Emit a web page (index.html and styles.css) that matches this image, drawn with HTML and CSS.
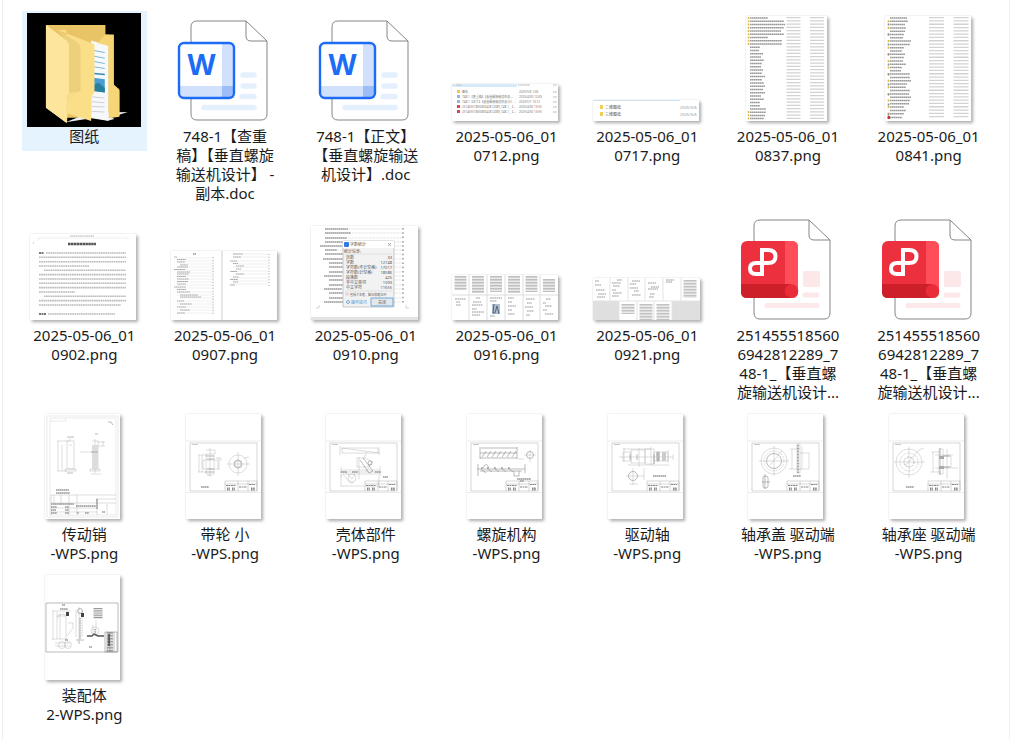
FILE: index.html
```html
<!DOCTYPE html>
<html lang="zh-CN">
<head>
  <meta charset="utf-8">
  <title>文件</title>
  <link rel="stylesheet" href="styles.css">
</head>
<body>
  <!-- Shared icons -->
  <svg class="defs" aria-hidden="true">
    <symbol id="page" viewBox="0 0 114 114">
      <path d="M29 8h49l21 20v73q0 6-6 6H29q-6 0-6-6V14q0-6 6-6z" fill="#fff" stroke="#858585"/>
      <path d="M78 8v15q0 5 5 5h16" fill="none" stroke="#858585"/>
    </symbol>
    <symbol id="doc" viewBox="0 0 114 114">
      <use href="#page"/>
      <path d="M75 62h11M75 73h11M74 83.500h12M36 94.500h50" stroke="#e5f0ff" stroke-width="5.500" stroke-linecap="round"/>
      <rect x="11" y="30" width="55" height="55" rx="5" fill="#fff"/>
      <path d="M54 30h7q5 0 5 5v50H54z" fill="#d1e0fb"/>
      <path d="M11 73h55v7q0 5-5 5H16q-5 0-5-5z" fill="#d1e0fb"/>
      <path d="M54 73h12v7q0 5-5 5h-7z" fill="#9dbdf8"/>
      <rect x="11" y="30" width="55" height="55" rx="5" fill="none" stroke="#1c6cf6" stroke-width="2.400"/>
      <text x="33.500" y="62" class="word">W</text>
    </symbol>
    <symbol id="pdf" viewBox="0 0 114 114">
      <use href="#page"/>
      <rect x="72" y="59" width="17" height="16" rx="2" fill="#fce8e9"/>
      <path d="M74 83h12M36 93.500h50" stroke="#fce8e9" stroke-width="5" stroke-linecap="round"/>
      <rect x="10" y="29" width="57" height="57" rx="6" fill="#ec303d"/>
      <path d="M54 29h7q6 0 6 6v45q0 6-6 6h-7z" fill="#ff4e59"/>
      <path d="M10 72h50v14H16q-6 0-6-6z" fill="#cd1f2a"/>
      <circle cx="60.500" cy="79" r="6.800" fill="#ea2c39"/>
      <path d="M31 62V38h6q7.500 0 7.500 6.500T37 51H25q-6 0-6 5.500t6 5.500h6z" fill="none" stroke="#fff" stroke-width="4"/>
    </symbol>

    <!-- Sheet frame with the title block, used by the drawings -->
    <symbol id="sheet" viewBox="0 0 75 105">
      <path d="M0 27h75M0 78.500h75" stroke="#ececec"/>
      <path d="M4 29h67v48H4zM39 67h32v10M39 67v10M39 70h32M52 67v10M62 67v10" fill="none" stroke="#999" stroke-width=".4"/>
      <path d="M6 30.500h6" stroke="#bbb" stroke-width=".8"/>
      <path d="M40 71.500h10M53 73h8M63 70.500h6" stroke="#888" stroke-width="1" stroke-dasharray="2 .5"/>
      <path d="M41 75h3M46 75h3M65 75h4" stroke="#888" stroke-width="3" stroke-dasharray="1.500 .7"/>
    </symbol>
  </svg>

  <main class="pane">
    <ul class="files">
      <li>
        <a class="file selected" href="#">
          <span class="thumb">
            <svg class="icon" viewBox="52 25 343 343">
              <path d="M52 25h343v343H52z" fill="#000"/>
              <path d="M109 61h179v29l25 2v155l17 12v76l-28 5H170z" fill="#e9c466"/>
              <path d="M168 354l70-28 117-3-50 16 10 5-20 5-50-7z" fill="#efefef"/>
              <path d="M245 108l52 15v226l-52-10z" fill="#f7f8fa"/>
              <path d="M288 90h25v150l17 15v82l-32 5V124l-34-9z" fill="#f5d576"/>
              <path d="M254 138l32 6M254 155l32 6M254 171l32 6M254 187l32 5" stroke="#79bad9" stroke-width="3"/>
              <path d="M254 207l32 3" stroke="#3387b8" stroke-width="5"/>
              <path d="M252 220l34 4v40l-34-4z" fill="#4a9dd0"/>
              <path d="M252 243l14-8 20 15v14l-34-4z" fill="#287f9c"/>
              <path d="M248 277l37 4M248 292l37 3M248 306l37 2M248 321l37 2" stroke="#bbb" stroke-width="2"/>
              <path d="M144 76l111 43v145l-9 12-1 74-75-24V76z" fill="#fbdf88"/>
              <path d="M144 76l58 36q11 7 11 18v128l-36 24V117z" fill="#ecd07b"/>
              <path d="M213 262l-35 20-6 74-63-46V61l56 42q13 10 13 22v140l35-3z" fill="#f7dc88"/>
              <path d="M109 61l56 42q13 10 13 22v143l-7 6v82l-62-46z" fill="#fde69c"/>
            </svg>
          </span>
          <span class="name">图纸</span>
        </a>
      </li>
      <li>
        <a class="file" href="#">
          <span class="thumb"><svg class="icon"><use href="#doc"/></svg></span>
          <span class="name">748-1【查重<br>稿】【垂直螺旋<br>输送机设计】 -<br>副本.doc</span>
        </a>
      </li>
      <li>
        <a class="file" href="#">
          <span class="thumb"><svg class="icon"><use href="#doc"/></svg></span>
          <span class="name">748-1【正文】<br>【垂直螺旋输送<br>机设计】.doc</span>
        </a>
      </li>
      <li>
        <a class="file" href="#">
          <span class="thumb">
            <svg class="picture" width="106" height="37" viewBox="0 0 106 37">
              <path d="M0 0h65v3H0z" fill="#d5eafa"/>
              <path d="M4 1h6M66 1h12M101 1h4" class="soft"/>
              <path d="M5 6h3v3H5z" fill="#f3c84c"/>
              <path d="M5 11h3v3H5zM5 16h3v3H5z" fill="#8ab8ec"/>
              <path d="M5 21h3v3H5zM5 26h3v3H5z" fill="#db4454"/>
              <g class="tiny">
                <text x="10" y="9">图纸</text><text x="67" y="9">2025/5/6 1:06</text>
                <text x="10" y="14">748-1【查重稿】【垂直螺旋输送机设...</text><text x="67" y="14">2025/4/30 12:00</text>
                <text x="10" y="19">748-1【正文】【垂直螺旋输送机设计】...</text><text x="67" y="19">2025/5/1 10:12</text>
                <text x="10" y="24">2514555185606942812289_748-1_【...</text><text x="67" y="24">2025/4/30 13:55</text>
                <text x="10" y="29">2514555185606942812289_748-1_【...</text><text x="67" y="29">2025/4/30 13:55</text>
              </g>
              <path d="M101 8h4M101 13h4M101 18h4M101 23h4M101 28h4" class="soft"/>
            </svg>
          </span>
          <span class="name">2025-05-06_01<br>0712.png</span>
        </a>
      </li>
      <li>
        <a class="file" href="#">
          <span class="thumb">
            <svg class="picture" width="106" height="21" viewBox="0 0 106 21">
              <path d="M0 0h87v1H0z" fill="#cfe5f8"/>
              <path d="M7 5h3v4H7zM7 12h3v4H7z" fill="#f4cb55"/>
              <g class="small">
                <text x="12" y="9">二维图纸</text><text x="87" y="9" class="date">2025/5/6</text>
                <text x="12" y="16">三维图纸</text><text x="87" y="16" class="date">2025/5/6</text>
              </g>
            </svg>
          </span>
          <span class="name">2025-05-06_01<br>0717.png</span>
        </a>
      </li>
      <li>
        <a class="file" href="#">
          <span class="thumb">
            <svg class="picture" width="81" height="105" viewBox="0 0 81 105">
              <path d="M4 2h18M4 5.200h34M4 8.500h35M4 11.700h34M4 15h31M4 18.200h34M4 21.500h18M4 24.700h32M4 28h32" class="words"/>
              <path d="M4 31.200h10M4 34.500h9M4 37.700h13M4 41h11M4 44.200h14M4 47.500h12M4 50.700h11M4 54h13M4 57.200h12M4 60.500h15M4 63.700h12M4 67h14M4 70.200h15M4 73.500h13M4 76.700h15M4 80h11M4 83.200h14M4 86.500h10M4 89.700h10M4 93h16M4 96.200h16M4 99.500h15M4 102.500h14" class="words"/>
              <path d="M2.500 1v29M2.500 95v9" stroke="#e2b945" stroke-width="1.600" stroke-dasharray="2 1.250"/>
              <path d="M47.500 1v103M71 1v103" stroke="#d2d2d2" stroke-width="14" stroke-dasharray="1.300 1.950"/>
            </svg>
          </span>
          <span class="name">2025-05-06_01<br>0837.png</span>
        </a>
      </li>
      <li>
        <a class="file" href="#">
          <span class="thumb">
            <svg class="picture" width="86" height="105" viewBox="0 0 86 105">
              <path d="M5 2h17M5 5.300h18M5 8.600h15M5 11.900h16M5 15.200h15M5 18.500h14M5 21.800h13M5 25.100h21M5 28.400h20M5 31.700h14M5 35h12M5 38.300h15M5 41.600h14M5 44.900h13M5 48.200h16M5 51.500h12M5 54.800h11M5 58.100h20M5 61.400h20M5 64.700h21M5 68h17M5 71.300h16M5 74.600h20M5 77.900h19M5 81.200h21M5 84.500h20M5 87.800h19M5 91.100h14M5 94.400h16M5 97.700h14M5 101.500h12" class="words"/>
              <path d="M3.500 4.300v96" stroke="#e0b53c" stroke-width="1.700" stroke-dasharray="2 4.600"/>
              <path d="M3.500 7.600v92" stroke="#888" stroke-width="1.500" stroke-dasharray="2 8"/>
              <path d="M2.500 100h2.500v3H2.500z" fill="#d32f36"/>
              <path d="M51.500 1v102M76 1v102" stroke="#d2d2d2" stroke-width="15" stroke-dasharray="1.300 2"/>
            </svg>
          </span>
          <span class="name">2025-05-06_01<br>0841.png</span>
        </a>
      </li>

      <li>
        <a class="file" href="#">
          <span class="thumb">
            <svg class="picture" width="106" height="86" viewBox="0 0 106 86">
              <path d="M8 7V4h90v3" fill="none" stroke="#ddd" stroke-width=".5"/>
              <path d="M40 2h24M3 9h1" class="soft"/>
              <path d="M38 10h28" stroke="#555" stroke-width="2.500" stroke-dasharray="2.500 .4"/>
              <path d="M9 19h5M9 80h7" stroke="#777" stroke-width="1.800" stroke-dasharray="2 .5"/>
              <path d="M16 19h80M9 23.300h87M9 27.700h87M9 32h50M14 36.300h82M9 40.600h87M9 45h87M9 49.300h87M9 53.600h87M9 58h36M14 62.300h82M9 66.600h87M9 71h82M18 80h67" class="prose"/>
            </svg>
          </span>
          <span class="name">2025-05-06_01<br>0902.png</span>
        </a>
      </li>
      <li>
        <a class="file" href="#">
          <span class="thumb">
            <svg class="picture" width="106" height="69" viewBox="0 0 106 69">
              <path d="M51 0v69" stroke="#ccc"/>
              <path d="M22 3h3" class="words"/>
              <path d="M5 7h38M6 10h37M9 13h34M6 16h37M3 19h40M6 22h37M6 25h37M6 28h37M6 31h37M6 34h37M3 37h40M6 41h37M6 44h37M9 47h34M9 50h34M6 53h37M9 56h34M6 59h37M6 62h37M62 3h36M62 6h36M62 10h36M62 13h36M62 16h36M62 20h36M62 23h36M59 27h39M62 30h36M59 33h39" stroke="#ddd" stroke-width=".5"/>
              <path d="M3 6h3M6 8.500h9M6 11h8M9 14h8M6 16h11M3 18.500h11M6 21h13M6 23h12M6 25.500h9M6 28h12M6 30.500h11M6 33h9M3 36h12M6 38.500h9M6 41h13M9 44h18M9 46h21M6 50h7M9 53h12M6 56h9M9 59h10M6 62h8M62 3h10M62 6h8M59 10h7M62 12.500h5M65 15h8M65 18h5M59 20.500h7M65 23h8M62 26h6M59 28.500h8M62 31h5M59 34h5" class="toc"/>
              <path d="M42 6v57M98 3v32" stroke="#aaa" stroke-dasharray="1 1.800"/>
            </svg>
          </span>
          <span class="name">2025-05-06_01<br>0907.png</span>
        </a>
      </li>
      <li>
        <a class="file" href="#">
          <span class="thumb">
            <svg class="picture" width="107" height="94" viewBox="0 0 107 94">
              <path d="M0 91h107v3H0z" fill="#e3e3e3"/>
              <path d="M14 3h23M14 7h26M14 12h22M14 16h22M9 20h22M14 24h12M14 28h18M12 33h20M18 37h14M18 41h14M18 46h14M13 50h18M18 54h14M18 59h14M13 63h18M18 67h14M18 72h14M13 76h20" class="words"/>
              <path d="M38 3h53M41 7h50M37 12h54M37 16h54M30 20h61M26 24h65M32 28h59M32 33h59M32 37h59M32 41h59M32 46h59M32 50h59M32 54h59M32 59h59M32 63h59M32 67h59M32 72h59M34 76h57" stroke="#bbb" stroke-width=".6" stroke-dasharray=".7 .7"/>
              <path d="M92 2v76" stroke="#999" stroke-width="1.500" stroke-dasharray="1.500 2.800"/>
              <path d="M5 82h3v-3M95 79v3h3" fill="none" stroke="#aaa" stroke-width=".5"/>
              <path d="M32 15h51v66H32z" fill="#f2f2f2" stroke="#bbb" stroke-width=".8"/>
              <path d="M32 15h51v7H32z" fill="#fff"/>
              <rect x="33" y="16" width="5" height="5" rx="1" fill="#2f7be8"/>
              <path d="M77 17l3 3m0-3l-3 3" stroke="#666" stroke-width=".5"/>
              <path d="M34 28h47M34 65h47" stroke="#ccc" stroke-width=".5"/>
              <g class="small">
                <text x="39" y="20">字数统计</text>
                <text x="33" y="27">统计信息:</text>
                <text x="35" y="33">页数</text><text x="81" y="33" class="value">33</text>
                <text x="35" y="38">字数</text><text x="81" y="38" class="value">12748</text>
                <text x="35" y="43">字符数(不计空格)</text><text x="81" y="43" class="value">17017</text>
                <text x="35" y="48">字符数(计空格)</text><text x="81" y="48" class="value">18586</text>
                <text x="35" y="53">段落数</text><text x="81" y="53" class="value">425</text>
                <text x="35" y="58">非中文单词</text><text x="81" y="58" class="value">1093</text>
                <text x="35" y="63">中文字符</text><text x="81" y="63" class="value">11655</text>
                <text x="39" y="70" class="option">包括文本框、脚注和尾注(F)</text>
                <text x="40" y="78" class="blue">操作技巧</text>
              </g>
              <path d="M35 67h2v2h-2z" fill="#fff" stroke="#999" stroke-width=".4"/>
              <circle cx="37" cy="76" r="1.500" fill="none" stroke="#468fd8" stroke-width=".7"/>
              <path d="M60 72h22v8H60z" fill="#e5e8eb" stroke="#4f9bd4" stroke-width=".8"/>
              <text x="67" y="78" class="small">关闭</text>
            </svg>
          </span>
          <span class="name">2025-05-06_01<br>0910.png</span>
        </a>
      </li>
      <li>
        <a class="file" href="#">
          <span class="thumb">
            <svg class="picture" width="106" height="45" viewBox="0 0 106 45">
              <path d="M17 0v45M35 0v45M53 0v45M71 0v45M88 0v45M0 20h106" stroke="#ddd"/>
              <path d="M8.500 1v14M26 1v17M44 1v16M62 1v17M79.500 1v16M97 4v13" stroke="#aaa" stroke-width="12" stroke-dasharray=".7 .8"/>
              <path d="M3 24h11M4 27h4M4 30h5M24 23h4M21 27h8M20 30h11M20 34h5M20 37h12M20 40h8M38 23h12M38 26h7M56 23h6M56 27h4M56 31h8M56 35h4M56 39h7M74 24h9M75 28h5M73 32h8M75 36h7M74 40h4M94 24h5M91 28h3M93 31h7M91 35h4M93 39h8" class="prose"/>
              <path d="M40 29h8v10h-8z" fill="#aebed0"/>
              <path d="M42 29l-1 9h2l2-7 2 8" fill="none" stroke="#546678"/>
              <path d="M38 41h5" class="prose"/>
            </svg>
          </span>
          <span class="name">2025-05-06_01<br>0916.png</span>
        </a>
      </li>
      <li>
        <a class="file" href="#">
          <span class="thumb">
            <svg class="picture" width="107" height="42" viewBox="0 0 107 42">
              <path d="M0 23h26v19H0zM79 23h28v19H79z" fill="#dfdfdf"/>
              <path d="M17 0v23M35 0v23M52 0v23M70 0v23M88 0v23M0 23h107M26 23v19M44 23v19M61 23v19M79 23v19" stroke="#e3e3e3"/>
              <path d="M2 3h4M2 7h6M3 12h9M5 16h8M4 19h8M24 2h5M19 5h9M20 8h7M19 12h4M20 15h9M19 18h7M39 3h8M37 6h6M37 10h8M41 13h5M39 17h9M55 5h8M58 9h8M55 11h10M57 16h5M56 19h5M73 2h8M73 4h6" class="prose"/>
              <path d="M97 2v18M35 26v10M53 26v16M70 26v16" stroke="#b0b0b0" stroke-width="13" stroke-dasharray=".7 .8"/>
            </svg>
          </span>
          <span class="name">2025-05-06_01<br>0921.png</span>
        </a>
      </li>
      <li>
        <a class="file" href="#">
          <span class="thumb"><svg class="icon"><use href="#pdf"/></svg></span>
          <span class="name">251455518560<br>6942812289_7<br>48-1_【垂直螺<br>旋输送机设计...</span>
        </a>
      </li>
      <li>
        <a class="file" href="#">
          <span class="thumb"><svg class="icon"><use href="#pdf"/></svg></span>
          <span class="name">251455518560<br>6942812289_7<br>48-1_【垂直螺<br>旋输送机设计...</span>
        </a>
      </li>

      <li>
        <a class="file" href="#">
          <span class="thumb">
            <svg class="picture drawing" viewBox="0 0 75 105">
              <path d="M2 2h71v101H2zM5 4h66v97H5zM5 7h16V4" class="line pale"/>
              <path d="M22 27h7v28h-7zM20 55h11v2H20zM13 27v30M17 31v26M12 27h12M12 57h10M25 24v3M24 31h3M47 27h6v28h-6M45 55h10v2H45zM58 27v5M53 28h7M53 32h7M46 60h10M35 38h12M50 25v34" class="line"/>
              <path d="M47 31h6v24h-6z" fill="#ddd"/>
              <path d="M22 23h7M22 59h6M50 20h3M46 38h7M63 8h3l2 3" class="line dark"/>
              <path d="M11 76h13M11 79h14" class="words"/>
              <path d="M6 81h65M6 89h65M6 94h46M6 98h46M6 81v20M32 81v20M52 84v17M9 81v10M16 81v10M24 81v20M62 90v11M52 85h19" class="line"/>
              <path d="M6 90h23M31 92h20M6 93h6M6 96h5M6 99h6M20 93h4M20 96h4M20 99h4M32 99h2M40 99h4M52 85v10M57 98h3" class="words"/>
            </svg>
          </span>
          <span class="name">传动销<br>-WPS.png</span>
        </a>
      </li>
      <li>
        <a class="file" href="#">
          <span class="thumb">
            <svg class="picture drawing" viewBox="0 0 75 105">
              <use href="#sheet"/>
              <circle cx="52" cy="50" r="9" class="line"/><circle cx="52" cy="50" r="4" class="line dark"/><circle cx="52" cy="50" r="3" class="line"/>
              <path d="M20 40h8v20h-8zM17 46h15v9H17zM13 41v17M16 41v17M12 41h9M12 58h9M20 36h9v4M24 34v28M33 44v12M30 44h5v3M21 61l5 1M41 50h23M52 38v24M58 44l5-1" class="line"/>
              <path d="M20 42h8M20 58h8M21 45h7M21 55h7" class="line dark"/>
              <path d="M15 73h8" class="words"/>
            </svg>
          </span>
          <span class="name">带轮 小<br>-WPS.png</span>
        </a>
      </li>
      <li>
        <a class="file" href="#">
          <span class="thumb">
            <svg class="picture drawing" viewBox="0 0 75 105">
              <use href="#sheet"/>
              <path d="M16 34h36v5H16zM14 32v9M53 33v8M15 34l39 5M31 44h8l8 4-6 5H31zM33 43v22M37 45l4-7M45 50l-5 8M15 56h39M14 58h41M16 60h38M15 53v10M54 52v10M17 60l7 9h4M20 58l6 7 3-5M15 72h38M15 61v12M53 62v12" class="line"/>
              <path d="M37 44l10 13-4 2-9-13" class="line dark"/>
              <circle cx="44" cy="49" r="2" class="line dark"/><circle cx="26" cy="64" r="4" class="line"/>
              <path d="M15 58h6M26 58h6M49 58h6M57 63h5" class="words"/>
            </svg>
          </span>
          <span class="name">壳体部件<br>-WPS.png</span>
        </a>
      </li>
      <li>
        <a class="file" href="#">
          <span class="thumb">
            <svg class="picture drawing" viewBox="0 0 75 105">
              <use href="#sheet"/>
              <path d="M13 39h37M13 44h37M14 34h36M13 33v12M50 33v12M15 43l4-6M20 43l4-6M25 43l4-6M30 43l4-6M35 43l4-6M40 43l4-6M45 43l4-6M10 55h48M13 57h42M11 50v12M58 50v9M47 57v5h5v-5M16 54q3-7 6 0" class="line dark"/>
              <path d="M14 55l5 4M20 54l5 4M27 54l5 4M34 54l5 4M41 54l5 4" class="line dark"/>
              <circle cx="63" cy="41" r="3.500" class="line dark"/><path d="M57 41h12M63 36v12M51 45h6" class="line"/>
              <path d="M14 54h2M20 54h2M27 54h2M34 54h2M41 54h2M50 65h14M53 67h4" class="words"/>
            </svg>
          </span>
          <span class="name">螺旋机构<br>-WPS.png</span>
        </a>
      </li>
      <li>
        <a class="file" href="#">
          <span class="thumb">
            <svg class="picture drawing" viewBox="0 0 75 105">
              <use href="#sheet"/>
              <path d="M15 38h8v9h-8zM23 36h14v13H23zM37 35h9v15h-9zM46 38h14v9H46zM16 34v14M31 34v19M43 33v18M60 36v13M11 43h54M15 35h28M20 51h25M45 51h16M65 40v6" class="line"/>
              <path d="M48 38h4v9h-4zM54 38h4v9h-4z" fill="#ccc"/>
              <path d="M22 40v6M29 40v6M46 40v10M50 37v11" class="line dark"/>
              <circle cx="25" cy="62" r="4.500" class="line dark"/><path d="M18 62h18M25 54v17M36 54v12M21 70h9" class="line"/>
              <path d="M45 62h13" class="words"/>
            </svg>
          </span>
          <span class="name">驱动轴<br>-WPS.png</span>
        </a>
      </li>
      <li>
        <a class="file" href="#">
          <span class="thumb">
            <svg class="picture drawing" viewBox="0 0 75 105">
              <use href="#sheet"/>
              <circle cx="26" cy="47" r="13" class="line"/><circle cx="26" cy="47" r="10" class="line" stroke-dasharray="2 1"/><circle cx="26" cy="47" r="7.500" class="line dark"/>
              <path d="M11 47h30M26 32v30M22 51l12-14M49 30h3v29h-3zM44 35v20M52 39h9v16h-9M54 33v22M42 35h10M41 55h12" class="line"/>
              <path d="M50 31v28" stroke="#aaa" stroke-width="2" stroke-dasharray="1 .5"/>
              <rect x="15" y="62" width="5" height="12" rx="2" class="line dark"/><path d="M14 68h8M17 60v15" class="line dark"/>
              <path d="M45 62h8" class="words"/>
            </svg>
          </span>
          <span class="name">轴承盖 驱动端<br>-WPS.png</span>
        </a>
      </li>
      <li>
        <a class="file" href="#">
          <span class="thumb">
            <svg class="picture drawing" viewBox="0 0 75 105">
              <use href="#sheet"/>
              <circle cx="20" cy="48" r="13" class="line"/><circle cx="20" cy="48" r="9" class="line" stroke-dasharray="3 1"/><circle cx="20" cy="48" r="5" class="line dark" stroke-dasharray="2 1"/>
              <path d="M5 48h31M20 33v31M16 52l14-16 5-2M50 35h4v25h-4zM44 38v20M54 42h8v11h-8M46 41h18M46 54h23M42 38h10M41 58h11M58 35v30" class="line"/>
              <path d="M51 34v27M54 42h7M54 53h7" class="line dark"/>
              <path d="M50 42h5v3h-5zM50 52h5v3h-5z" fill="#aaa"/>
              <path d="M17 73h8" class="words"/>
            </svg>
          </span>
          <span class="name">轴承座 驱动端<br>-WPS.png</span>
        </a>
      </li>

      <li>
        <a class="file" href="#">
          <span class="thumb">
            <svg class="picture drawing" viewBox="0 0 75 105">
              <path d="M1 28h72v49H1z" class="line dark"/>
              <path d="M8 35v30M12 37v27M15 38v26M8 36h18M12 41h9M12 43l2-3 5-1 2 3v22M7 64h15M23 48h5v5l-6 8M10 71h15M10 68h15M31 35v27M37 35v27M34 32v35M48 50v10M51 45v15" class="line"/>
              <circle cx="23" cy="70" r="3.500" class="line"/><circle cx="17" cy="70" r="3.500" class="line"/><circle cx="35" cy="36" r="2.500" class="line dark"/><circle cx="50" cy="56" r="4" class="line"/>
              <path d="M15 34h8M17 30h3M44 72h3M20 65h3" class="words"/>
              <path d="M21 37h3v4h-3zM36 38h3v4h-3z" fill="#444"/>
              <path d="M35 43v21M50 54v5" stroke="#777" stroke-dasharray="1 .7"/>
              <path d="M42 61h5l2-2 4 2h6" fill="none" stroke="#555" stroke-width="1.400"/>
              <path d="M31 65h8M34 66v3" class="line dark"/>
              <path d="M53 33v11" stroke="#999" stroke-width="9" stroke-dasharray="1 .8"/>
              <path d="M60 57h12v20H60zM62 57v20M65 57v20M69 57v20" class="line dark"/>
              <path d="M65 57v20" stroke="#888" stroke-width="6" stroke-dasharray=".7 .8"/>
              <path d="M64 59v12" stroke="#444" stroke-width="1.500"/>
            </svg>
          </span>
          <span class="name">装配体<br>2-WPS.png</span>
        </a>
      </li>
    </ul>
  </main>
</body>
</html>
```

FILE: styles.css
```css
body {
  margin: 0;
  background: #fff;
  color: #1b1b1b;
  font-family: "Noto Sans", "Noto Sans CJK SC", sans-serif;
  font-size: 15px;
  line-height: 19px;
}
.defs {
  display: none;
}
.pane {
  box-sizing: border-box;
  min-height: 100vh;
  margin: 0 14px 0 2px;
  padding: 11px 10px 0 11px;
  border-left: 1px solid #f0f0f0;
  border-right: 1px solid #f0f0f0;
}
/* Seven files in a row */
.files {
  display: grid;
  grid-template-columns: repeat(7, 1fr);
  row-gap: 2px;
  margin: 0;
  padding: 0;
  list-style: none;
}
.file {
  display: flex;
  flex-direction: column;
  align-items: center;
  width: 125px;
  margin: 0 auto;
  padding: 2px 0 5px;
  color: inherit;
  text-align: center;
  text-decoration: none;
}
.selected,
.file:hover {
  background: #e5f3ff;
}
.thumb {
  display: flex;
  align-items: flex-end;
  justify-content: center;
  width: 114px;
  height: 114px;
}
.icon {
  display: block;
  width: 114px;
  height: 114px;
}
.name {
  white-space: nowrap;
}

/* Image previews */
.picture {
  display: block;
  margin: 0 2px 6px 0;
  background: #fff;
  box-shadow: 0 0 1px #ccc, 2px 2px 3px #aaa;
}
.drawing {
  width: 75px;
  height: 105px;
  margin-right: 4px;
}
.word {
  fill: #1c6cf6;
  font-size: 29px;
  font-weight: bold;
  text-anchor: middle;
}
.words {
  fill: none;
  stroke: #999;
  stroke-width: 1.5;
  stroke-dasharray: 1.7 .3;
}
.prose {
  fill: none;
  stroke: #bbb;
  stroke-width: 1.6;
  stroke-dasharray: 1.7 .5;
}
.toc {
  stroke: #aaa;
  stroke-dasharray: 1.7 .3;
}
.soft {
  stroke: #ccc;
  stroke-width: 1.5;
  stroke-dasharray: 1.5 .4;
}
.line {
  fill: none;
  stroke: #aaa;
  stroke-width: .4;
}
.dark {
  stroke: #777;
  stroke-width: .5;
}
.pale {
  stroke: #ccc;
}
.tiny {
  fill: #777;
  font-size: 3px;
}
.small {
  fill: #555;
  font-size: 4px;
}
.option {
  font-size: 3px;
}
.date {
  fill: #999;
}
.value {
  text-anchor: end;
}
.blue {
  fill: #468fd8;
}
```
